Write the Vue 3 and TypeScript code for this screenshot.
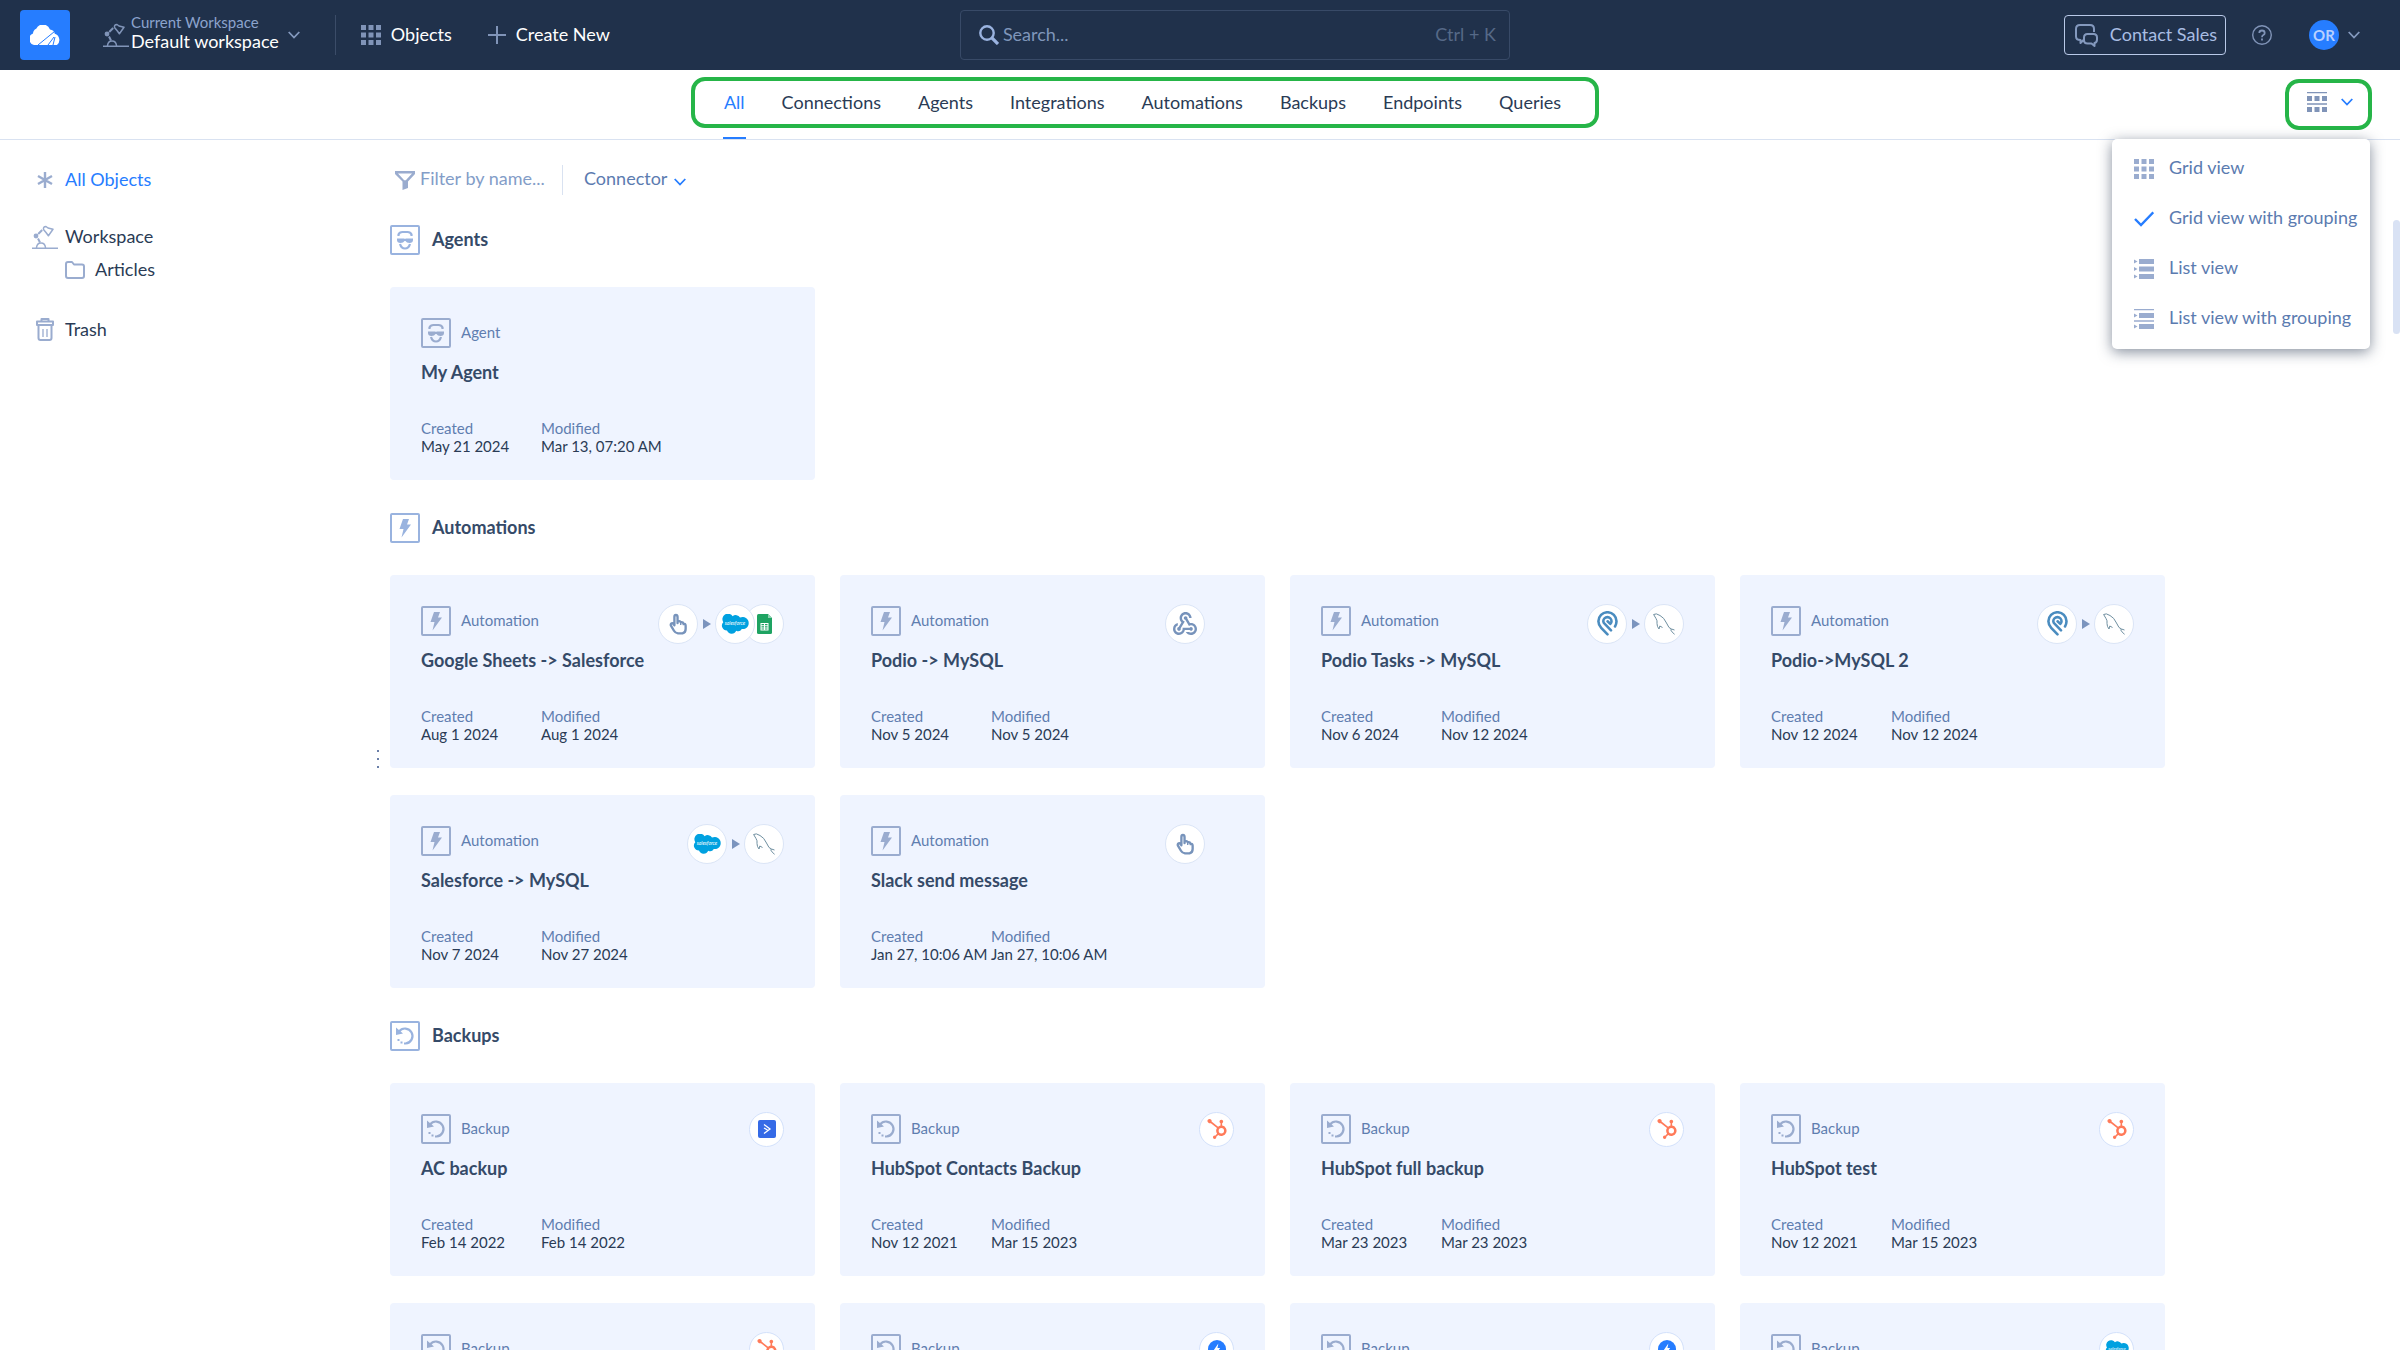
<script setup lang="ts">
import { ref } from 'vue'

type Kind = 'agent' | 'automation' | 'backup'

interface Item {
  kind: Kind
  name: string
  created: string
  modified: string
  trigger?: string
  targets?: string[]
}

interface Group {
  title: string
  kind: Kind
  items: Item[]
}

const labels: Record<Kind, string> = {
  agent: 'Agent',
  automation: 'Automation',
  backup: 'Backup',
}

const tabs = ['All', 'Connections', 'Agents', 'Integrations', 'Automations', 'Backups', 'Endpoints', 'Queries']
const activeTab = ref('All')

const views = [
  { id: 'grid', label: 'Grid view' },
  { id: 'grid-group', label: 'Grid view with grouping' },
  { id: 'list', label: 'List view' },
  { id: 'list-group', label: 'List view with grouping' },
]
const activeView = ref('grid-group')
const menuOpen = ref(true)

const search = ref('')
const filter = ref('')
const connector = ref('')

const auto = (name: string, created: string, modified: string, trigger: string, targets: string[] = []): Item => ({
  kind: 'automation', name, created, modified, trigger, targets,
})
const backup = (name: string, created: string, modified: string, target: string): Item => ({
  kind: 'backup', name, created, modified, targets: [target],
})

const groups: Group[] = [
  {
    title: 'Agents',
    kind: 'agent',
    items: [{ kind: 'agent', name: 'My Agent', created: 'May 21 2024', modified: 'Mar 13, 07:20 AM' }],
  },
  {
    title: 'Automations',
    kind: 'automation',
    items: [
      auto('Google Sheets -> Salesforce', 'Aug 1 2024', 'Aug 1 2024', 'hand', ['salesforce', 'sheets']),
      auto('Podio -> MySQL', 'Nov 5 2024', 'Nov 5 2024', 'webhook'),
      auto('Podio Tasks -> MySQL', 'Nov 6 2024', 'Nov 12 2024', 'podio', ['mysql']),
      auto('Podio->MySQL 2', 'Nov 12 2024', 'Nov 12 2024', 'podio', ['mysql']),
      auto('Salesforce -> MySQL', 'Nov 7 2024', 'Nov 27 2024', 'salesforce', ['mysql']),
      auto('Slack send message', 'Jan 27, 10:06 AM', 'Jan 27, 10:06 AM', 'hand'),
    ],
  },
  {
    title: 'Backups',
    kind: 'backup',
    items: [
      backup('AC backup', 'Feb 14 2022', 'Feb 14 2022', 'activecampaign'),
      backup('HubSpot Contacts Backup', 'Nov 12 2021', 'Mar 15 2023', 'hubspot'),
      backup('HubSpot full backup', 'Mar 23 2023', 'Mar 23 2023', 'hubspot'),
      backup('HubSpot test', 'Nov 12 2021', 'Mar 15 2023', 'hubspot'),
      backup('', '', '', 'hubspot'),
      backup('', '', '', 'flash'),
      backup('', '', '', 'flash'),
      backup('', '', '', 'salesforce'),
    ],
  },
]
</script>

<template>
  <div class="app">
    <svg class="sprite" aria-hidden="true">
      <symbol id="cloud" viewBox="0 0 30 20">
        <path fill="#fff" d="M6 20a6 6 0 0 1-3-11.500a5.500 5.500 0 0 1 3.200-4.800A7.500 7.500 0 0 1 20 4.500a5.500 5.500 0 0 1 4.800 4.300A6.500 6.500 0 0 1 27 20z" />
        <path fill="none" stroke="#267dff" d="M8 20 24.500 6.500M18 20l6-8M23 20l2-8" />
      </symbol>
      <symbol id="lamp" viewBox="0 0 26 24">
        <circle cx="4" cy="11" r="2.400" fill="currentColor" />
        <path fill="none" stroke="currentColor" stroke-width="2" d="m6.200 9 4-4M6 13.500l2 4" />
        <path fill="none" stroke="currentColor" stroke-width="1.500" stroke-linejoin="round" d="M11.500 4.500q-.5-3 2.500-3l2 1.500 5 1.300-4.600 6.500L14 7.500zM4.500 22.500q.5-4.500 4.500-4.500t4.500 4.500M0 23.200h26" />
      </symbol>
      <symbol id="chevron" viewBox="0 0 12 8">
        <path fill="none" stroke="currentColor" stroke-width="1.800" d="m.7 1 5.300 5.500L11.300 1" />
      </symbol>
      <symbol id="grid" viewBox="0 0 20 20">
        <path fill="currentColor" d="M0 0h5v5H0zM7.500 0h5v5h-5zM15 0h5v5h-5zM0 7.500h5v5H0zM7.500 7.500h5v5h-5zM15 7.500h5v5h-5zM0 15h5v5H0zM7.500 15h5v5h-5zM15 15h5v5h-5z" />
      </symbol>
      <symbol id="grid-group" viewBox="0 0 20 20">
        <path fill="currentColor" d="M0 0h20v1.300H0zM0 4h5v5H0zM7.500 4h5v5h-5zM15 4h5v5h-5zM0 11.200h20v1.500H0zM0 15h5v5H0zM7.500 15h5v5h-5zM15 15h5v5h-5z" />
      </symbol>
      <symbol id="list" viewBox="0 0 20 20">
        <path fill="currentColor" d="M0 .5 3.500 2.500 0 4.500zM5 0h15v5H5zM0 8l3.500 2L0 12zM5 7.500h15v5H5zM0 15.500l3.500 2-3.500 2zM5 15h15v5H5z" />
      </symbol>
      <symbol id="list-group" viewBox="0 0 20 20">
        <path fill="currentColor" d="M0 0h20v1.300H0zM0 4.500l3.500 2-3.500 2zM5 4h15v5H5zM0 11.200h20v1.500H0zM0 15.500l3.500 2-3.500 2zM5 15h15v5H5z" />
      </symbol>
      <symbol id="check" viewBox="0 0 20 20">
        <path fill="none" stroke="#267dff" stroke-width="2.400" d="m1 10 6 6L19.300 3.300" />
      </symbol>
      <symbol id="plus" viewBox="0 0 18 18">
        <path fill="none" stroke="currentColor" stroke-width="2" d="M9 0v18M0 9h18" />
      </symbol>
      <symbol id="magnifier" viewBox="0 0 20 20">
        <circle cx="8" cy="8" r="6.700" fill="none" stroke="currentColor" stroke-width="2.400" />
        <path stroke="currentColor" stroke-width="3.200" d="m12.500 12.500 6.500 6.500" />
      </symbol>
      <symbol id="chat" viewBox="0 0 23 23">
        <path fill="none" stroke="currentColor" stroke-width="2" stroke-linejoin="round" d="M9 15.500 5.500 19v-3Q1 16 1 12.500V5q0-4 4-4h10q4 0 4 4v3M12.500 10h6q3.500 0 3.500 3.500v2q0 3-2.500 3.500v3l-3-2.500h-4Q9 19.500 9 16v-2.500Q9 10 12.500 10z" />
      </symbol>
      <symbol id="help" viewBox="0 0 20 20">
        <circle cx="10" cy="10" r="9.300" fill="none" stroke="currentColor" stroke-width="1.400" />
        <path fill="none" stroke="currentColor" stroke-width="1.800" d="M7.300 8q0-2.500 2.700-2.500T12.700 8q0 1.300-1.400 2Q10 10.700 10 12.200M10 13.500v2" />
      </symbol>
      <symbol id="asterisk" viewBox="0 0 16 16">
        <path stroke="currentColor" stroke-width="2.400" d="M8 0v16M1 4l14 8M15 4 1 12" />
      </symbol>
      <symbol id="folder" viewBox="0 0 20 18">
        <path fill="none" stroke="currentColor" stroke-width="2" stroke-linejoin="round" d="M1 3q0-2 2-2h4l2 2.500h8q2 0 2 2V15q0 2-2 2H3q-2 0-2-2z" />
      </symbol>
      <symbol id="trash" viewBox="0 0 18 23">
        <path fill="none" stroke="currentColor" stroke-width="2" stroke-linejoin="round" d="M5.500 3.500V1h7v2.500M1 3.500h16v3.500H1zM2.500 7v13q0 2 2 2h9q2 0 2-2V7" />
        <path stroke="currentColor" stroke-width="1.300" d="M7 11v8M11 11v8" />
      </symbol>
      <symbol id="funnel" viewBox="0 0 20 19">
        <path fill="currentColor" fill-rule="evenodd" d="M0 0h20v3l-7 7.500V17l-5.500 2v-8.500L0 3zM3 2.500l6.200 6.800h1.600L17 2.500z" />
      </symbol>
      <symbol id="agent" viewBox="0 0 26 26">
        <path fill="none" stroke="currentColor" stroke-width="2.200" d="M6.500 9V7.500q1-2.500 4-2.500h5q3 0 4 2.500V9" />
        <path fill="currentColor" d="M5 11.500h7.200l.8.600.8-.6H21V13q0 3-3.500 3-3 0-4-2h-1q-1 2-4 2Q5 16 5 13z" />
        <path fill="none" stroke="currentColor" stroke-width="2.200" d="M8 17q1.300 4.500 5 4.500t5-4.500" />
      </symbol>
      <symbol id="automation" viewBox="0 0 26 26">
        <path fill="currentColor" d="M11 4h6l-2 5.500h4L9.500 22.500l2-8.500h-4z" />
      </symbol>
      <symbol id="backup" viewBox="0 0 26 26">
        <path fill="none" stroke="currentColor" stroke-width="2.200" d="M7 8.500A7.500 7.500 0 1 1 13.500 20.500h-1.500" />
        <path fill="currentColor" d="M4 4.500v7.500l7-1.500zM5.500 16h2v2h-2zM8.500 18.500h2v2h-2z" />
      </symbol>
      <symbol id="hand" viewBox="0 0 20 24">
        <path fill="none" stroke="#7793bb" stroke-width="2.600" stroke-linejoin="round" stroke-linecap="round" d="M6 13V4q0-2 1.700-2T9.500 4v7M9.500 8.500q3 0 3.500 1.500 2.500-.5 3 1.500 2.500 0 2.500 2.500v3.500q0 4-3.500 5h-5Q7 22 5.500 19.500L2 13.500Q1.500 11 4 11l2 2.500" />
        <path fill="none" stroke="#7793bb" stroke-width="1.600" d="M13 10v3M16 11.500v2" />
      </symbol>
      <symbol id="webhook" viewBox="2 2 20 19">
        <path fill="#7793bb" d="M10,15l5.880,0c0.270-0.310,0.670-0.500,1.120-0.500c0.830,0,1.500,0.670,1.500,1.500c0,0.830-0.670,1.500-1.500,1.500c-0.440,0-0.840-0.190-1.120-0.500l-3.980,0c-0.460,2.280-2.480,4-4.900,4c-2.760,0-5-2.240-5-5c0-2.420,1.720-4.440,4-4.900l0,2.070C4.840,13.580,4,14.700,4,16c0,1.650,1.350,3,3,3s3-1.350,3-3V15z M12.500,4c1.650,0,3,1.350,3,3h2c0-2.760-2.240-5-5-5c-2.760,0-5,2.240-5,5c0,1.430,0.600,2.710,1.550,3.620l-2.350,3.900C6.020,14.660,5.500,15.270,5.500,16c0,0.830,0.670,1.500,1.500,1.500s1.500-0.670,1.500-1.500c0-0.160-0.020-0.310-0.070-0.450l3.380-5.630C10.490,9.610,9.500,8.420,9.500,7C9.500,5.350,10.850,4,12.500,4z M17,13c-0.640,0-1.230,0.200-1.720,0.540l-3.050-5.070C11.530,8.350,11,7.740,11,7c0-0.830,0.670-1.500,1.500-1.500S14,6.170,14,7c0,0.150-0.020,0.290-0.060,0.430l2.190,3.650C16.410,11.030,16.700,11,17,11l0,0c2.760,0,5,2.240,5,5c0,2.760-2.240,5-5,5c-1.850,0-3.470-1.010-4.330-2.500l2.670,0C15.820,18.820,16.390,19,17,19c1.650,0,3-1.350,3-3S18.650,13,17,13z" />
      </symbol>
      <symbol id="podio" viewBox="0 0 21 25">
        <path fill="none" stroke="#4a8cbf" stroke-width="2.600" stroke-linecap="round" stroke-linejoin="round" d="M10.500 23.300 4.200 16.800Q1.400 13.800 1.400 10.300a9 9 0 0 1 18.100 0q0 2.700-1.500 5.200M14 19.300 8 13.200Q6.300 11.500 6.300 10.200a4.100 4.100 0 0 1 8.200 0q0 1.800-1.200 2.700l-2.700-2.600" />
      </symbol>
      <symbol id="mysql" viewBox="0 0 22 22">
        <path fill="none" stroke="#6f8fa0" d="M.6 1.500Q3-.2 7 2.500q4 2 6.500 7.500l2.500 4.500 2.500 1.500-.8 1 1.500 2 2.500 2.500M.6 1.500l2.400 4q1.500 2 1 5l.5 3 1.500 2.500.8-3 2.700 1.500M18.500 16l3 1" />
      </symbol>
      <symbol id="salesforce" viewBox="0 0 28 20">
        <path fill="#00a1e0" d="M11.600 2.200A4.900 4.900 0 0 1 19 3.600a6 6 0 0 1 8.700 5.600c0 3.500-2.900 6.300-6.900 5.800a4.400 4.400 0 0 1-5.600 1.800A5 5 0 0 1 6 16.500 4.900 4.900 0 0 1 2.300 8.200 5.500 5.500 0 0 1 11.600 2.200z" />
        <text x="14" y="11" fill="#fff" font-family="Lato, sans-serif" font-size="5" font-style="italic" text-anchor="middle">salesforce</text>
      </symbol>
      <symbol id="sheets" viewBox="0 0 15 20">
        <path fill="#1ea362" d="M1.500 0H11l4 4v14.500q0 1.500-1.500 1.500h-12Q0 20 0 18.500v-17Q0 0 1.500 0z" />
        <path fill="#8ed1b1" d="M11 0v4h4z" />
        <path fill="#fff" fill-rule="evenodd" d="M3.500 9h8v7.500h-8zM4.500 10v1.200H7V10zM8 10v1.200h2.500V10zM4.500 12.200v1.200H7v-1.200zM8 12.200v1.200h2.500v-1.200zM4.500 14.400v1.200H7v-1.200zM8 14.400v1.200h2.500v-1.200z" />
      </symbol>
      <symbol id="activecampaign" viewBox="0 0 18 18">
        <rect width="18" height="18" rx="2" fill="#356ae6" />
        <path fill="none" stroke="#fff" stroke-width="1.300" d="M6 4.500 12 9l-6 4.500M6 8l3.500 2" />
      </symbol>
      <symbol id="hubspot" viewBox="0 0 24 24">
        <path fill="#ff7a59" d="M18.164 7.930V5.084a2.198 2.198 0 001.267-1.978v-.067A2.200 2.200 0 0017.238.845h-.067a2.200 2.200 0 00-2.193 2.193v.067a2.196 2.196 0 001.252 1.973l.013.006v2.852a6.220 6.220 0 00-2.969 1.310l.012-.01-7.828-6.095A2.497 2.497 0 104.300 4.656l-.012.006 7.697 5.991a6.176 6.176 0 00-1.038 3.446c0 1.343.425 2.588 1.147 3.607l-.013-.02-2.342 2.343a1.968 1.968 0 00-.58-.095h-.002a2.033 2.033 0 102.033 2.033 1.978 1.978 0 00-.1-.595l.005.014 2.317-2.317a6.247 6.247 0 104.782-11.134l-.036-.005zm-.964 9.378a3.206 3.206 0 113.215-3.207v.002a3.206 3.206 0 01-3.207 3.207z" />
      </symbol>
      <symbol id="flash" viewBox="0 0 20 20">
        <circle cx="10" cy="10" r="10" fill="#267dff" />
        <path fill="#fff" d="m11.500 4-5 7h3l-1 5 5-7h-3z" />
      </symbol>
    </svg>

    <header class="topbar">
      <a class="logo" href="#" aria-label="Home"><svg><use href="#cloud" /></svg></a>
      <button class="workspace" type="button">
        <svg class="lamp"><use href="#lamp" /></svg>
        <span class="workspace-text">
          <span class="workspace-hint">Current Workspace</span>
          <span>Default workspace</span>
        </span>
        <svg class="chevron"><use href="#chevron" /></svg>
      </button>
      <nav class="main-nav">
        <a href="#"><svg class="icon20"><use href="#grid" /></svg><span class="label">Objects</span></a>
        <a href="#"><svg class="icon18"><use href="#plus" /></svg><span class="label">Create New</span></a>
      </nav>
      <label class="search">
        <svg class="icon20"><use href="#magnifier" /></svg>
        <input v-model="search" type="text" placeholder="Search..." aria-label="Search">
        <span class="label shortcut">Ctrl + K</span>
      </label>
      <div class="account">
        <button class="contact" type="button"><svg><use href="#chat" /></svg><span class="label">Contact Sales</span></button>
        <button class="help" type="button" aria-label="Help"><svg class="icon20"><use href="#help" /></svg></button>
        <button class="user" type="button">
          <span class="avatar">OR</span>
          <svg class="chevron"><use href="#chevron" /></svg>
        </button>
      </div>
    </header>

    <div class="tabbar">
      <nav class="tabs">
        <a
          v-for="tab in tabs"
          :key="tab"
          href="#"
          :class="{ active: tab === activeTab }"
          @click.prevent="activeTab = tab"
        >{{ tab }}</a>
      </nav>
      <div class="view-switch">
        <button class="view-button" type="button" aria-label="Change view" @click="menuOpen = !menuOpen">
          <svg class="icon20"><use href="#grid-group" /></svg>
          <svg class="chevron"><use href="#chevron" /></svg>
        </button>
        <div v-if="menuOpen" class="menu" role="menu">
          <button
            v-for="view in views"
            :key="view.id"
            type="button"
            role="menuitem"
            @click="activeView = view.id"
          >
            <svg class="icon20"><use :href="view.id === activeView ? '#check' : '#' + view.id" /></svg>
            <span class="label">{{ view.label }}</span>
          </button>
        </div>
      </div>
    </div>

    <div class="body">
      <aside class="sidebar">
        <a class="selected" href="#"><svg class="asterisk"><use href="#asterisk" /></svg><span class="label">All Objects</span></a>
        <div class="tree">
          <a href="#"><svg class="lamp"><use href="#lamp" /></svg><span class="label">Workspace</span></a>
          <a href="#" class="child"><svg class="folder"><use href="#folder" /></svg><span class="label">Articles</span></a>
        </div>
        <a href="#"><svg class="trash"><use href="#trash" /></svg><span class="label">Trash</span></a>
      </aside>
      <div class="resizer" role="separator" aria-orientation="vertical"><i /><i /><i /></div>

      <main class="content">
        <div class="filters">
          <label class="filter">
            <svg><use href="#funnel" /></svg>
            <input v-model="filter" type="text" placeholder="Filter by name..." aria-label="Filter by name">
          </label>
          <label class="connector">
            <select v-model="connector" aria-label="Connector">
              <option value="">Connector</option>
            </select>
            <svg class="chevron"><use href="#chevron" /></svg>
          </label>
        </div>

        <section v-for="group in groups" :key="group.title" class="group">
          <h2>
            <svg class="kind"><use :href="'#' + group.kind" /></svg><span class="label">{{ group.title }}</span>
          </h2>
          <div class="cards">
            <article v-for="(item, i) in group.items" :key="i" class="card">
              <div class="card-head">
                <svg class="kind"><use :href="'#' + item.kind" /></svg>
                <span class="label">{{ labels[item.kind] }}</span>
                <div class="flow" :class="[item.kind, { single: item.trigger && !item.targets?.length }]">
                  <template v-if="item.trigger">
                    <span class="badge first"><svg :class="item.trigger"><use :href="'#' + item.trigger" /></svg></span>
                    <i v-if="item.targets?.length" class="arrow" />
                  </template>
                  <span v-for="target in item.targets" :key="target" class="badge">
                    <svg :class="target"><use :href="'#' + target" /></svg>
                  </span>
                </div>
              </div>
              <h3>{{ item.name }}</h3>
              <dl>
                <div><dt>Created</dt><dd>{{ item.created }}</dd></div>
                <div><dt>Modified</dt><dd>{{ item.modified }}</dd></div>
              </dl>
            </article>
          </div>
        </section>
      </main>
      <div class="scrollbar" />
    </div>
  </div>
</template>

<style>
body {
  margin: 0;
  background: #fff;
}
</style>

<style scoped>
.app {
  display: flex;
  flex-direction: column;
  height: 100vh;
  overflow: hidden;
  font: 18px/24px Lato, Carlito, sans-serif;
  color: #2a3b55;
}
* {
  box-sizing: border-box;
}
svg {
  display: block;
  flex: none;
}
a {
  color: inherit;
  text-decoration: none;
}
button,
input,
select {
  margin: 0;
  padding: 0;
  border: 0;
  background: none;
  color: inherit;
  font: inherit;
  outline: none;
}
button {
  cursor: pointer;
}
.sprite {
  display: none;
}
.label {
  padding-bottom: 3px;
}
.icon20 {
  width: 20px;
  height: 20px;
}
.icon18 {
  width: 18px;
  height: 18px;
}
.chevron {
  width: 12px;
  height: 8px;
}
.lamp {
  width: 26px;
  height: 24px;
}

.topbar {
  display: flex;
  flex: none;
  align-items: center;
  height: 70px;
  padding: 0 40px 0 20px;
  background: #20314b;
  color: #fff;
}
.logo {
  display: flex;
  align-items: center;
  justify-content: center;
  width: 50px;
  height: 50px;
  border-radius: 4px;
  background: #267dff;
}
.logo svg {
  width: 30px;
  height: 20px;
}
.workspace {
  display: flex;
  align-items: center;
  height: 40px;
  margin-left: 33px;
  padding-right: 35px;
  border-right: 1px solid #3b4c68;
  text-align: left;
}
.workspace .lamp {
  color: #8094b8;
}
.workspace-text {
  display: flex;
  flex-direction: column;
  margin: 0 9px 0 2px;
  padding-bottom: 6px;
  line-height: 19px;
}
.workspace-hint {
  color: #8ca3cd;
  font-size: 15px;
}
.workspace .chevron,
.user .chevron {
  color: #8499be;
}
.main-nav {
  display: flex;
  gap: 36px;
  margin-left: 25px;
}
.main-nav a {
  display: flex;
  align-items: center;
  gap: 10px;
}
.main-nav svg {
  color: #8094b8;
}
.search {
  display: flex;
  align-items: center;
  width: 550px;
  height: 50px;
  margin-left: 350px;
  padding: 0 13px 0 18px;
  border: 1px solid #384a67;
  border-radius: 4px;
  color: #9ab3e0;
}
.search input {
  flex: 1;
  min-width: 0;
  margin-left: 4px;
  padding-bottom: 3px;
}
.search input::placeholder {
  color: #7f96ba;
  opacity: 1;
}
.shortcut {
  color: #566987;
}
.account {
  display: flex;
  align-items: center;
  margin-left: auto;
  color: #a9bde3;
}
.contact {
  display: flex;
  align-items: center;
  gap: 12px;
  height: 40px;
  padding: 0 8px 0 10px;
  border: 1px solid #b9c9e8;
  border-radius: 4px;
}
.contact svg {
  width: 23px;
  height: 23px;
  color: #8499be;
}
.help {
  margin: 0 37px 0 26px;
  color: #8094b8;
}
.user {
  display: flex;
  align-items: center;
  gap: 9px;
}
.avatar {
  width: 30px;
  height: 30px;
  border-radius: 50%;
  background: #267dff;
  color: #b7d0ff;
  font-size: 15px;
  font-weight: 700;
  line-height: 30px;
  text-align: center;
}

.tabbar {
  position: relative;
  display: flex;
  flex: none;
  align-items: flex-start;
  justify-content: center;
  height: 70px;
  padding: 7px 110px 0 0;
  border-bottom: 1px solid #d9e2f1;
}
.tabs {
  display: flex;
  gap: 37px;
  height: 51px;
  padding: 0 34px 0 29px;
  border: 4px solid #26b548;
  border-radius: 14px;
  line-height: 43px;
}
.tabs a {
  position: relative;
}
.tabs .active {
  color: #267dff;
}
.tabs .active::after {
  position: absolute;
  top: 56px;
  right: -1px;
  left: -1px;
  height: 2px;
  background: #267dff;
  content: '';
}
.view-switch {
  position: absolute;
  top: 9px;
  right: 28px;
  z-index: 2;
}
.view-button {
  display: flex;
  align-items: center;
  gap: 14px;
  height: 51px;
  padding: 0 15px 5px 18px;
  border: 4px solid #26b548;
  border-radius: 14px;
  color: #8094b8;
}
.view-button .chevron {
  color: #267dff;
}
.menu {
  position: absolute;
  top: 60px;
  right: 2px;
  width: 258px;
  padding: 5px 0;
  border-radius: 5px;
  background: #fff;
  box-shadow: 0 3px 14px rgba(32, 49, 75, 0.55);
  color: #5b7bb0;
}
.menu button {
  display: flex;
  align-items: center;
  gap: 15px;
  width: 100%;
  height: 50px;
  padding-left: 22px;
  white-space: nowrap;
}
.menu .label {
  padding-bottom: 4px;
}
.menu svg {
  color: #9aaccf;
}

.body {
  display: flex;
  flex: 1;
  min-height: 0;
}
.sidebar {
  display: flex;
  flex: none;
  flex-direction: column;
  gap: 24px;
  width: 372px;
  padding: 23px 0 0 32px;
}
.sidebar a {
  display: flex;
  align-items: center;
  height: 33px;
}
.sidebar .label {
  padding-bottom: 1px;
}
.sidebar svg {
  color: #9aaccf;
}
.sidebar .selected {
  color: #267dff;
}
.sidebar .lamp {
  margin-right: 7px;
}
.asterisk {
  width: 16px;
  height: 16px;
  margin: 0 12px 0 5px;
}
.tree {
  padding-bottom: 3px;
}
.sidebar .child {
  padding-left: 33px;
}
.folder {
  width: 20px;
  height: 18px;
  margin-right: 10px;
}
.trash {
  width: 18px;
  height: 23px;
  margin: 0 11px 0 4px;
}
.resizer {
  display: flex;
  flex: none;
  flex-direction: column;
  align-items: center;
  justify-content: center;
  gap: 6px;
  width: 12px;
  padding-top: 28px;
}
.resizer i {
  width: 2px;
  height: 2px;
  background: #6a7fa8;
}

.content {
  flex: 1;
  min-width: 0;
  padding: 25px 6px 0;
  overflow: hidden;
}
.filters {
  display: flex;
  align-items: center;
  height: 30px;
  margin-bottom: 30px;
}
.filter {
  display: flex;
  align-items: center;
  width: 173px;
  height: 30px;
  padding-left: 5px;
  border-right: 1px solid #d9e2f1;
}
.filter svg {
  width: 20px;
  height: 19px;
  color: #9aaccf;
}
.filter input {
  width: 135px;
  margin-left: 5px;
  padding-bottom: 4px;
}
.filter input::placeholder {
  color: #839dc8;
  opacity: 1;
}
.connector {
  display: flex;
  align-items: center;
  gap: 6px;
  margin-left: 21px;
  color: #5b7bb0;
}
.connector select {
  padding-bottom: 4px;
  appearance: none;
}
.connector .chevron {
  margin-top: 4px;
  color: #267dff;
}
.group {
  margin-bottom: 33px;
}
h2,
h3 {
  margin: 0;
  color: #354a68;
  font-size: 18px;
  font-weight: 700;
  line-height: 24px;
}
h2 {
  display: flex;
  align-items: center;
  gap: 12px;
  height: 30px;
  margin-bottom: 32px;
}
.kind {
  width: 30px;
  height: 30px;
  border: 2px solid currentColor;
  border-radius: 2px;
  color: #9aaccf;
}
h2 .kind {
  color: #99b3df;
}
.cards {
  display: grid;
  grid-template-columns: repeat(auto-fill, 425px);
  gap: 27px 25px;
}
.card {
  height: 193px;
  padding: 31px 31px 0;
  border-radius: 4px;
  background: #eff4ff;
}
.card-head {
  display: flex;
  align-items: center;
  gap: 10px;
  height: 30px;
  color: #5f7eb0;
  font-size: 15px;
}
.flow {
  display: flex;
  align-items: center;
  margin-left: auto;
}
.flow.single {
  margin-right: 29px;
}
.badge {
  display: flex;
  align-items: center;
  justify-content: center;
  width: 40px;
  height: 40px;
  border: 1px solid #dbe5f6;
  border-radius: 50%;
  background: #fff;
}
.arrow + .badge {
  z-index: 1;
}
.badge:not(.first) + .badge {
  margin-left: -11px;
}
.automation .badge {
  margin-top: 5px;
}
.backup .badge {
  width: 35px;
  height: 35px;
  border-color: #d3e1fb;
}
.arrow {
  margin: 5px 4px 0 5px;
  border: solid transparent;
  border-width: 5px 0 5px 8px;
  border-left-color: #7b94be;
}
svg.hand {
  width: 18px;
  height: 22px;
}
svg.webhook {
  width: 24px;
  height: 23px;
}
svg.podio {
  width: 21px;
  height: 25px;
}
svg.mysql {
  width: 22px;
  height: 22px;
}
svg.salesforce {
  width: 28px;
  height: 20px;
}
svg.sheets {
  width: 15px;
  height: 20px;
}
svg.activecampaign,
svg.flash {
  width: 18px;
  height: 18px;
}
svg.hubspot {
  width: 20px;
  height: 20px;
}
.backup svg.salesforce {
  width: 24px;
  height: 18px;
}
h3 {
  height: 24px;
  margin-top: 12px;
}
dl {
  display: flex;
  margin: 35px 0 0;
  font-size: 15px;
  line-height: 18px;
  white-space: nowrap;
}
dl div {
  width: 120px;
}
dt {
  color: #5f7eb0;
}
dd {
  margin: 0;
}
.scrollbar {
  flex: none;
  width: 7px;
  height: 114px;
  margin-top: 80px;
  border-radius: 4px;
  background: #d9e2f4;
}
</style>
